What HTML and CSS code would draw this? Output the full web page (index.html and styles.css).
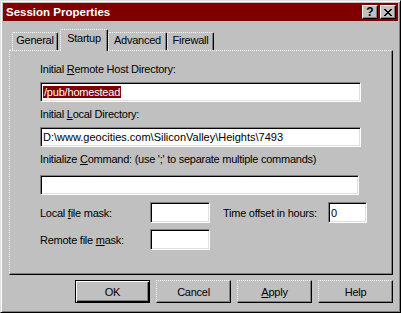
FILE: index.html
```html
<!DOCTYPE html>
<html lang="en">
<head>
    <meta charset="UTF-8">
    <title>Session Properties</title>
    <link rel="stylesheet" href="styles.css">
</head>
<body>
    <div class="window">
        <div class="titlebar">
            <span class="title">Session Properties</span>
            <div class="title-buttons">
                <div class="title-btn help-btn">?</div>
                <div class="title-btn">
                    <svg width="8" height="7" viewBox="0 0 8 7">
                        <path d="M0 0h2v1h1v1h2v-1h1v-1h2v1h-1v1h-1v1h-1v1h1v1h1v1h1v1h-2v-1h-1v-1h-2v1h-1v1h-2v-1h1v-1h1v-1h1v-1h-1v-1h-1v-1h-1z" fill="#000"/>
                    </svg>
                </div>
            </div>
        </div>

        <div class="content">
            <div class="tabs">
                <div class="tab tab-general">General</div>
                <div class="tab tab-startup active">Startup</div>
                <div class="tab tab-advanced">Advanced</div>
                <div class="tab tab-firewall">Firewall</div>
            </div>

            <div class="panel">
                <div class="field-label">Initial <u>R</u>emote Host Directory:</div>
                <div class="textbox wide"><span class="selected">/pub/homestead</span></div>

                <div class="field-label">Initial <u>L</u>ocal Directory:</div>
                <div class="textbox wide">D:\www.geocities.com\SiliconValley\Heights\7493</div>

                <div class="field-label">Initialize <u>C</u>ommand: (use ';' to separate multiple commands)</div>
                <div class="textbox wide command"></div>

                <div class="row first-row">
                    <span class="row-label">Local <u>f</u>ile mask:</span>
                    <div class="textbox small"></div>
                    <span class="row-label offset-label">Time offset in hours:</span>
                    <div class="textbox tiny">0</div>
                </div>
                <div class="row">
                    <span class="row-label">Remote file <u>m</u>ask:</span>
                    <div class="textbox small"></div>
                </div>
            </div>

            <div class="buttons">
                <div class="btn default">OK</div>
                <div class="btn">Cancel</div>
                <div class="btn"><u>A</u>pply</div>
                <div class="btn">Help</div>
            </div>
        </div>
    </div>
</body>
</html>
```

FILE: styles.css
```css
/* Win95 style dialog */
body {
    margin: 0;
    padding: 0;
    background-color: #c0c0c0;
    font-family: "Liberation Sans", Arial, sans-serif;
    font-size: 11px;
    letter-spacing: -0.25px;
    color: #000;
}
.window {
    width: 401px;
    height: 313px;
    box-sizing: border-box;
    background: #c0c0c0;
    border: 1px solid;
    border-color: #dfdfdf #000 #000 #dfdfdf;
    box-shadow: inset 1px 1px #fff, inset -1px -1px #808080;
    padding: 2px;
}
.titlebar {
    height: 18px;
    background-color: #800000;
    display: flex;
    align-items: center;
    justify-content: space-between;
    padding: 0 2px 0 3px;
}
.title {
    color: #fff;
    font-weight: bold;
    font-size: 11.5px;
    letter-spacing: 0;
}
.title-buttons {
    display: flex;
    gap: 2px;
}
.title-btn {
    width: 16px;
    height: 14px;
    box-sizing: border-box;
    background: #c0c0c0;
    border: 1px solid;
    border-color: #fff #000 #000 #fff;
    box-shadow: inset -1px -1px #808080;
    display: flex;
    align-items: center;
    justify-content: center;
}
.help-btn {
    font-weight: bold;
    font-size: 12px;
    line-height: 12px;
    letter-spacing: 0;
}
.content {
    padding: 0 5px 0 6px;
}
.tabs {
    height: 29px;
    display: flex;
    align-items: flex-end;
    padding-left: 3px;
}
.tab {
    height: 18px;
    box-sizing: border-box;
    border-top: 1px dotted #fff;
    border-left: 1px dotted #fff;
    border-right: 1px solid #000;
    border-radius: 2px 2px 0 0;
    box-shadow: inset -1px 0 #808080;
    text-align: center;
    line-height: 13px;
    padding-top: 1px;
}
.tab-general { width: 46px; }
.tab-startup { width: 48px; margin-left: 2px; }
.tab-advanced { width: 59px; }
.tab-firewall { width: 47px; }
.tab.active {
    height: 22px;
    margin-bottom: -1px;
    padding-top: 2px;
    background: #c0c0c0;
    position: relative;
    z-index: 1;
}
.panel {
    height: 225px;
    box-sizing: border-box;
    border-top: 1px dotted #fff;
    border-left: 1px dotted #fff;
    border-right: 1px solid #000;
    border-bottom: 1px solid #000;
    box-shadow: inset -1px -1px #808080;
    padding: 12px 0 0 30px;
}
.field-label {
    height: 13px;
    line-height: 13px;
    margin-top: 6px;
    white-space: nowrap;
}
.field-label:first-child {
    margin-top: 0;
}
.textbox {
    height: 20px;
    box-sizing: border-box;
    background: #fff;
    border: 1px solid;
    border-color: #808080 #fff #fff #808080;
    box-shadow: inset 1px 1px #000, inset -1px -1px #dfdfdf;
    padding: 2px 2px 0 2px;
    line-height: 14px;
    letter-spacing: 0;
    white-space: nowrap;
    margin-top: 6px;
}
.textbox.wide {
    width: 321px;
}
.textbox.command {
    width: 319px;
    margin-top: 9px;
}
.selected {
    background: #800000;
    color: #fff;
    padding: 0 1px;
    letter-spacing: -0.2px;
}
.row {
    display: flex;
    align-items: center;
    height: 21px;
    margin-top: 6px;
}
.first-row {
    margin-top: 7px;
}
.row .textbox {
    margin-top: 0;
    height: 21px;
}
.row-label {
    width: 110px;
    white-space: nowrap;
}
.offset-label {
    width: 105px;
    margin-left: 13px;
}
.textbox.small {
    width: 60px;
}
.textbox.tiny {
    width: 39px;
    padding-top: 3px;
}
.buttons {
    display: flex;
    justify-content: flex-end;
    gap: 6px;
    margin-top: 5px;
}
.btn {
    width: 75px;
    height: 23px;
    box-sizing: border-box;
    border-top: 1px dotted #fff;
    border-left: 1px dotted #fff;
    border-right: 1px solid #000;
    border-bottom: 1px solid #000;
    box-shadow: inset -1px -1px #808080;
    display: flex;
    align-items: center;
    justify-content: center;
}
.btn.default {
    border: 1px solid #000;
    box-shadow: inset 1px 1px #fff, inset -1px -1px #000, inset -2px -2px #808080;
}
```
